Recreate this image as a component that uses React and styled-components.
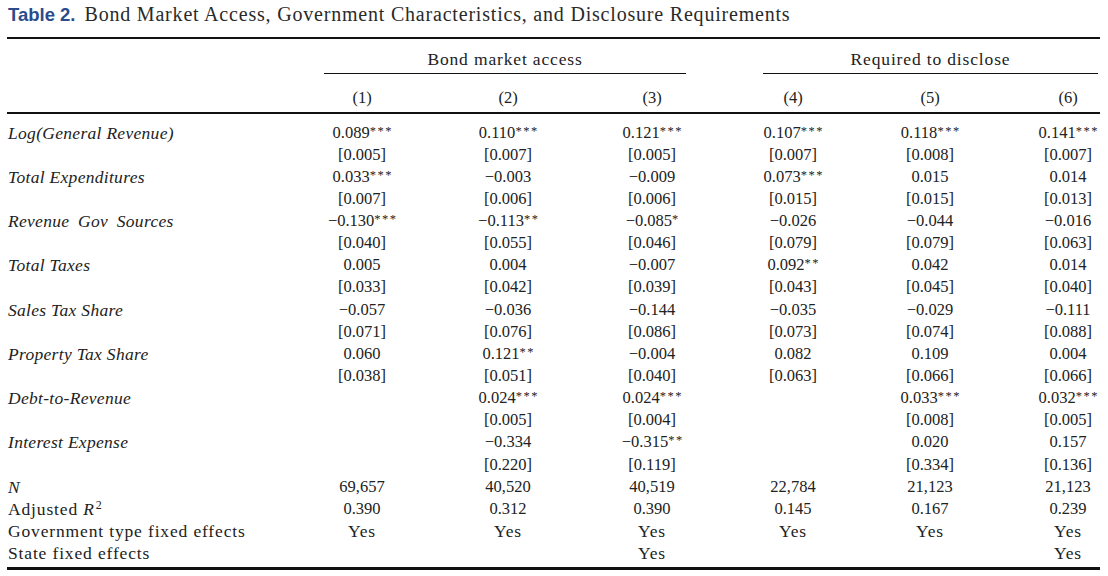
import React from "react";
import styled, { createGlobalStyle } from "styled-components";

const GlobalStyle = createGlobalStyle`
  html, body {
    margin: 0;
    padding: 0;
    background: #ffffff;
  }
  body {
    font-family: "Liberation Serif", "Times New Roman", serif;
    color: #222222;
  }
`;

const COLUMNS = "283px 144px 148px 140px 142px 132px 104px";

const Page = styled.div`
  width: 1108px;
  height: 576px;
  padding: 0 8px 0 7px;
  box-sizing: border-box;
  overflow: hidden;
`;

const Caption = styled.div`
  height: 29px;
  padding-left: 1px;
  display: flex;
  align-items: center;
  gap: 9px;
  white-space: nowrap;
`;

const CaptionLabel = styled.span`
  font-family: "Liberation Sans", Arial, sans-serif;
  font-weight: 700;
  font-size: 18.5px;
  color: #2b4c8c;
`;

const CaptionTitle = styled.span`
  font-size: 20px;
  letter-spacing: 0.8px;
  color: #2a2a2a;
`;

const Table = styled.div`
  margin-top: 8px;
  border-top: 2px solid #111;
  border-bottom: 3px solid #111;
  font-size: 16.5px;
`;

const HeadGrid = styled.div`
  display: grid;
  grid-template-columns: ${COLUMNS};
`;

const GroupHead = styled.div`
  grid-column: ${(p) => p.$span};
  display: flex;
  align-items: center;
  justify-content: center;
  height: 35px;
  padding-top: 6px;
  margin: 0 ${(p) => p.$right}px 0 ${(p) => p.$left}px;
  border-bottom: 1.5px solid #111;
  box-sizing: border-box;
  font-size: 17.5px;
  letter-spacing: 0.85px;
`;

const Blank = styled.div``;

const NumberCell = styled.div`
  height: 39.5px;
  padding-top: 10px;
  display: flex;
  align-items: center;
  justify-content: center;
  border-bottom: 2px solid #111;
  box-sizing: border-box;
  padding-left: ${(p) => (p.$last ? 40 : 0)}px;
`;

const BodyGrid = styled.div`
  display: grid;
  grid-template-columns: ${COLUMNS};
  grid-auto-rows: 22.15px;
  line-height: 22.15px;
  padding: 8px 0 3px;
`;

const Label = styled.div`
  white-space: nowrap;
  padding-left: 1px;
  font-size: 17.5px;
  font-style: ${(p) => (p.$italic ? "italic" : "normal")};
  letter-spacing: ${(p) => (p.$italic ? 0.3 : 0.85)}px;
  word-spacing: ${(p) => p.$wordGap || 0}px;
`;

const Cell = styled.div`
  text-align: center;
  white-space: nowrap;
  padding-left: ${(p) => (p.$last ? 40 : 0)}px;
  font-size: ${(p) => (p.$text ? 17.5 : 16.5)}px;
  letter-spacing: ${(p) => (p.$text ? 0.85 : 0)}px;
`;

const Stars = styled.span`
  font-size: 12.5px;
  position: relative;
  top: -3px;
  letter-spacing: 1.5px;
  margin-right: -1.5px;
`;

const Sup = styled.span`
  font-size: 12px;
  position: relative;
  top: -6px;
  margin-left: 1px;
`;

const rows = [
  {
    label: "Log(General Revenue)",
    coef: ["0.089***", "0.110***", "0.121***", "0.107***", "0.118***", "0.141***"],
    se: ["0.005", "0.007", "0.005", "0.007", "0.008", "0.007"],
  },
  {
    label: "Total Expenditures",
    coef: ["0.033***", "−0.003", "−0.009", "0.073***", "0.015", "0.014"],
    se: ["0.007", "0.006", "0.006", "0.015", "0.015", "0.013"],
  },
  {
    label: "Revenue Gov Sources",
    gap: 4,
    coef: ["−0.130***", "−0.113**", "−0.085*", "−0.026", "−0.044", "−0.016"],
    se: ["0.040", "0.055", "0.046", "0.079", "0.079", "0.063"],
  },
  {
    label: "Total Taxes",
    coef: ["0.005", "0.004", "−0.007", "0.092**", "0.042", "0.014"],
    se: ["0.033", "0.042", "0.039", "0.043", "0.045", "0.040"],
  },
  {
    label: "Sales Tax Share",
    coef: ["−0.057", "−0.036", "−0.144", "−0.035", "−0.029", "−0.111"],
    se: ["0.071", "0.076", "0.086", "0.073", "0.074", "0.088"],
  },
  {
    label: "Property Tax Share",
    coef: ["0.060", "0.121**", "−0.004", "0.082", "0.109", "0.004"],
    se: ["0.038", "0.051", "0.040", "0.063", "0.066", "0.066"],
  },
  {
    label: "Debt-to-Revenue",
    coef: ["", "0.024***", "0.024***", "", "0.033***", "0.032***"],
    se: ["", "0.005", "0.004", "", "0.008", "0.005"],
  },
  {
    label: "Interest Expense",
    coef: ["", "−0.334", "−0.315**", "", "0.020", "0.157"],
    se: ["", "0.220", "0.119", "", "0.334", "0.136"],
  },
];

const stats = [
  { label: <i>N</i>, values: ["69,657", "40,520", "40,519", "22,784", "21,123", "21,123"] },
  {
    label: (
      <>
        Adjusted <i>R</i>
        <Sup>2</Sup>
      </>
    ),
    values: ["0.390", "0.312", "0.390", "0.145", "0.167", "0.239"],
  },
  {
    label: "Government type fixed effects",
    text: true,
    values: ["Yes", "Yes", "Yes", "Yes", "Yes", "Yes"],
  },
  { label: "State fixed effects", text: true, values: ["", "", "Yes", "", "", "Yes"] },
];

const Coef = ({ value }) => {
  const m = value.match(/^([^*]*)(\**)$/);
  return (
    <>
      {m[1]}
      {m[2] && <Stars>{m[2]}</Stars>}
    </>
  );
};

const App = () => {
  return (
    <Page>
      <GlobalStyle />
      <Caption>
        <CaptionLabel>Table 2.</CaptionLabel>
        <CaptionTitle>
          Bond Market Access, Government Characteristics, and Disclosure Requirements
        </CaptionTitle>
      </Caption>
      <Table>
        <HeadGrid>
          <Blank />
          <GroupHead $span="2 / 5" $left={34} $right={36}>
            Bond market access
          </GroupHead>
          <GroupHead $span="5 / 8" $left={41} $right={2}>
            Required to disclose
          </GroupHead>
          <NumberCell />
          {[1, 2, 3, 4, 5, 6].map((n) => (
            <NumberCell key={n} $last={n === 6}>
              ({n})
            </NumberCell>
          ))}
        </HeadGrid>

        <BodyGrid>
          {rows.map((row) => (
            <React.Fragment key={row.label}>
              <Label $italic $wordGap={row.gap}>
                {row.label}
              </Label>
              {row.coef.map((c, i) => (
                <Cell key={i} $last={i === 5}>
                  <Coef value={c} />
                </Cell>
              ))}
              <Blank />
              {row.se.map((s, i) => (
                <Cell key={i} $last={i === 5}>
                  {s ? `[${s}]` : ""}
                </Cell>
              ))}
            </React.Fragment>
          ))}

          {stats.map((row, r) => (
            <React.Fragment key={r}>
              <Label>{row.label}</Label>
              {row.values.map((v, i) => (
                <Cell key={i} $last={i === 5} $text={row.text}>
                  {v}
                </Cell>
              ))}
            </React.Fragment>
          ))}
        </BodyGrid>
      </Table>
    </Page>
  );
};

export default App;
